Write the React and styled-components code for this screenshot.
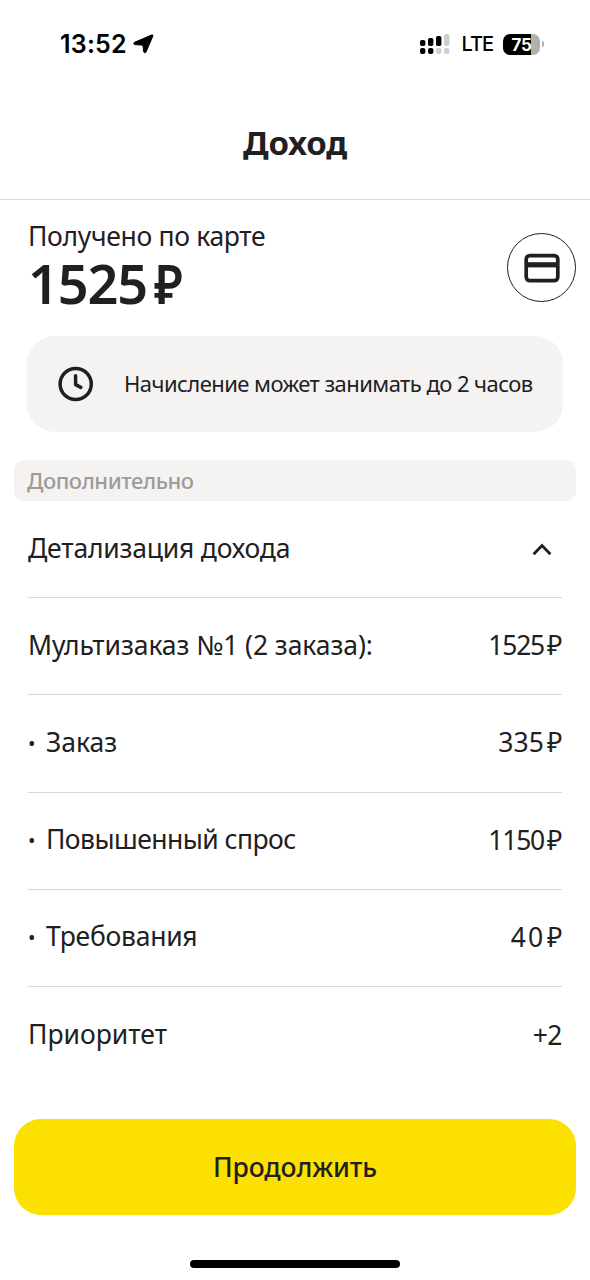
import styled, { createGlobalStyle } from 'styled-components'

const rows = [
    { label: 'Мультизаказ №1 (2 заказа):', value: '1525', rub: true, spacing: '-0.08px', digits: '-1.2px' },
    { label: 'Заказ', value: '335', rub: true, bullet: true, digits: '0.1px' },
    { label: 'Повышенный спрос', value: '1150', rub: true, bullet: true, spacing: '-0.55px', digits: '-1.2px' },
    { label: 'Требования', value: '40', rub: true, bullet: true, spacing: '-0.25px', digits: '2px', gap: '2px' },
    { label: 'Приоритет', value: '+2', digits: '-0.5px' },
];

const App = () => {
    return (
        <Screen>
            <GlobalStyle />
            <StatusBar>
                <Clock>
                    13:52
                    <svg width="21" height="20" viewBox="0 0 21 20" stroke="#000" strokeLinejoin="round">
                        <path d="M18.6 1 C19.6 .6 20.2 1.2 19.8 2.2 L13 18 C12.3 19.2 10.9 18.9 10.7 17.8 L10 12.2 Q9.8 11.2 8.8 11.1 L2 10.6 C.6 10.4 .4 8.9 1.6 8.3 Z" />
                    </svg>
                </Clock>
                <Indicators>
                    <svg width="30" height="20" viewBox="0 0 30 20">
                        <rect x="0" y="6" width="5.4" height="6" rx="1.8" />
                        <rect x="8" y="4" width="5.4" height="8" rx="1.8" />
                        <rect x="16" y="2" width="5.4" height="10" rx="1.8" />
                        <rect x="24" y="0" width="5.4" height="12" rx="1.8" fill="#cfcfcf" />
                        <rect x="0" y="14" width="5.4" height="6" rx="2" />
                        <rect x="8" y="14" width="5.4" height="6" rx="2" />
                        <rect x="16" y="14" width="5.4" height="6" rx="2" fill="#cfcfcf" />
                        <rect x="24" y="14" width="5.4" height="6" rx="2" fill="#cfcfcf" />
                    </svg>
                    <Network>LTE</Network>
                    <Battery>75</Battery>
                    <BatteryTip />
                </Indicators>
            </StatusBar>

            <Header>
                <Title>Доход</Title>
            </Header>

            <Summary>
                <div>
                    <Caption>Получено по карте</Caption>
                    <Amount>1525<span>₽</span></Amount>
                </div>
                <CardButton>
                    <svg width="36" height="30" viewBox="0 0 36 30" fill="none" stroke="#21201f">
                        <rect x="2.2" y="2.6" width="31.6" height="25" rx="3.5" strokeWidth="3.7" />
                        <path d="M2 11.8H34" strokeWidth="5.2" />
                    </svg>
                </CardButton>
            </Summary>

            <Notice>
                <svg width="36" height="36" viewBox="0 0 36 36" fill="none" stroke="#21201f" strokeLinecap="round">
                    <circle cx="17.7" cy="18" r="15.6" strokeWidth="3.5" />
                    <path d="M17.6 9.8V18.6L22.8 21.4" strokeWidth="3.5" strokeLinejoin="round" />
                </svg>
                <NoticeText>Начисление может занимать до 2 часов</NoticeText>
            </Notice>

            <SectionTitle>Дополнительно</SectionTitle>

            <List>
                <Row>
                    <Label $spacing="-0.2px">Детализация дохода</Label>
                    <Chevron width="20" height="13" viewBox="0 0 20 13" fill="none">
                        <path d="M1.6 11.2L10 2.6L18.4 11.2" stroke="#21201f" strokeWidth="2.9" />
                    </Chevron>
                </Row>
                {rows.map((row) => (
                    <Row key={row.label}>
                        <Label $spacing={row.spacing}>
                            {row.bullet && <Bullet>•</Bullet>}
                            {row.label}
                        </Label>
                        <Value $spacing={row.digits}>
                            {row.value}
                            {row.rub && <Ruble $gap={row.gap}>₽</Ruble>}
                        </Value>
                    </Row>
                ))}
            </List>

            <Continue>Продолжить</Continue>
            <HomeBar />
        </Screen>
    );
};

const GlobalStyle = createGlobalStyle`
    *{
        box-sizing: border-box;
    }
    body{
        margin: 0;
        background: #fff;
        color: #21201f;
        font-family: "Noto Sans", "Open Sans", sans-serif;
    }
    svg{
        display: block;
        flex-shrink: 0;
    }
`;

const Screen = styled.div`
    width: 590px;
    height: 1280px;
    display: flex;
    flex-direction: column;
    overflow: hidden;
`;

const StatusBar = styled.div`
    height: 88px;
    padding: 0 46px 0 60px;
    display: flex;
    align-items: center;
    justify-content: space-between;
    color: #000;
    font-family: Inter, sans-serif;
`;

const Clock = styled.div`
    display: flex;
    align-items: center;
    gap: 6px;
    font-size: 25px;
    font-weight: 600;
    letter-spacing: 0.2px;
`;

const Indicators = styled.div`
    display: flex;
    align-items: center;
`;

const Network = styled.span`
    margin-left: 11px;
    font-size: 20px;
    font-weight: 500;
    letter-spacing: -1px;
`;

const Battery = styled.div`
    width: 37px;
    height: 21px;
    margin-left: 10px;
    border-radius: 7px;
    background: linear-gradient(to right, #000 28px, #b0b0b0 28px);
    color: #fff;
    font-size: 17px;
    font-weight: 700;
    line-height: 22px;
    text-align: center;
    letter-spacing: -0.4px;
`;

const BatteryTip = styled.div`
    width: 2px;
    height: 6px;
    margin-left: 2px;
    border-radius: 0 2px 2px 0;
    background: #b0b0b0;
`;

const Header = styled.header`
    height: 112px;
    padding-bottom: 2px;
    border-bottom: 1px solid #dcdcdc;
    display: flex;
    align-items: center;
    justify-content: center;
`;

const Title = styled.h1`
    margin: 0;
    font-size: 33px;
    font-weight: 700;
    line-height: 44px;
    letter-spacing: -0.2px;
`;

const Summary = styled.section`
    height: 136px;
    padding: 19px 14px 0 28px;
    display: flex;
    justify-content: space-between;
`;

const Caption = styled.div`
    font-size: 26.5px;
    line-height: 34px;
    letter-spacing: -0.32px;
`;

const Amount = styled.div`
    font-size: 54px;
    font-weight: 600;
    line-height: 60px;
    letter-spacing: -1.1px;
    span{
        display: inline-block;
        margin-left: 7px;
        transform: scaleX(0.9);
        transform-origin: left;
    }
`;

const CardButton = styled.button`
    width: 69px;
    height: 69px;
    margin-top: 14px;
    padding: 0;
    border: 1px solid #21201f;
    border-radius: 50%;
    background: #fff;
    display: flex;
    align-items: center;
    justify-content: center;
`;

const Notice = styled.section`
    height: 96px;
    margin: 0 27px;
    padding-left: 31px;
    border-radius: 28px;
    background: #f4f3f2;
    display: flex;
    align-items: center;
    gap: 30px;
`;

const NoticeText = styled.p`
    margin: 0;
    padding-bottom: 2px;
    font-size: 22px;
    letter-spacing: -0.55px;
    white-space: nowrap;
`;

const SectionTitle = styled.h2`
    height: 41px;
    margin: 28px 14px 0;
    padding-left: 13px;
    border-radius: 10px;
    background: #f4f3f2;
    color: #9e9b98;
    font-size: 22px;
    font-weight: 500;
    line-height: 41px;
    letter-spacing: -0.45px;
`;

const List = styled.div`
    height: 618px;
    margin: 0 28px;
`;

const Row = styled.div`
    height: 97.2px;
    display: flex;
    align-items: center;
    justify-content: space-between;
    &:not(:last-child){
        border-bottom: 1px solid #d9d8d8;
    }
`;

const Label = styled.span`
    padding-bottom: 3px;
    font-size: 26.5px;
    letter-spacing: ${(props) => props.$spacing || '0'};
    white-space: nowrap;
`;

const Bullet = styled.span`
    display: inline-block;
    width: 18px;
    font-size: 20px;
    line-height: 20px;
    vertical-align: 1px;
`;

const Value = styled.span`
    padding-bottom: 2px;
    font-size: 26.5px;
    letter-spacing: ${(props) => props.$spacing};
`;

const Ruble = styled.span`
    margin-left: ${(props) => props.$gap || '3px'};
    letter-spacing: -0.5px;
`;

const Chevron = styled.svg`
    margin-right: 10px;
`;

const Continue = styled.button`
    height: 96px;
    flex-shrink: 0;
    margin: 0 14px;
    border: none;
    border-radius: 27px;
    background: #fce000;
    color: #21201f;
    font-family: inherit;
    font-size: 26.5px;
    font-weight: 500;
    letter-spacing: -0.1px;
`;

const HomeBar = styled.div`
    width: 210px;
    height: 8px;
    flex-shrink: 0;
    margin: 45px auto 0;
    border-radius: 4px;
    background: #000;
`;

export default App;
